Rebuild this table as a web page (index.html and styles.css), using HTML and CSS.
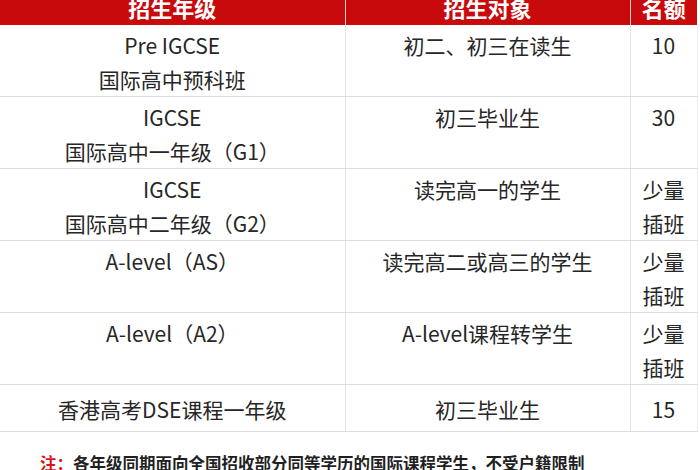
FILE: index.html
```html
<!DOCTYPE html>
<html lang="zh-CN">
<head>
<meta charset="utf-8">
<link rel="stylesheet" href="styles.css">
</head>
<body>
<table class="grid">
  <colgroup>
    <col class="c1"><col class="c2"><col class="c3">
  </colgroup>
  <thead>
    <tr><th>招生年级</th><th>招生对象</th><th>名额</th></tr>
  </thead>
  <tbody>
    <tr><td>Pre IGCSE<br>国际高中预科班</td><td>初二、初三在读生</td><td>10</td></tr>
    <tr><td>IGCSE<br>国际高中一年级（G1）</td><td>初三毕业生</td><td>30</td></tr>
    <tr><td>IGCSE<br>国际高中二年级（G2）</td><td>读完高一的学生</td><td>少量<br>插班</td></tr>
    <tr><td>A-level（AS）</td><td>读完高二或高三的学生</td><td>少量<br>插班</td></tr>
    <tr><td>A-level（A2）</td><td>A-level课程转学生</td><td>少量<br>插班</td></tr>
    <tr class="single"><td>香港高考DSE课程一年级</td><td>初三毕业生</td><td>15</td></tr>
  </tbody>
</table>
<p class="note"><span class="mark">注：</span>各年级同期面向全国招收部分同等学历的国际课程学生，不受户籍限制</p>
</body>
</html>
```

FILE: styles.css
```css
html, body {
  margin: 0;
  padding: 0;
  background: #fff;
  overflow: hidden;
}
body {
  width: 700px;
  height: 470px;
  font-family: "Open Sans", "Noto Sans CJK SC", sans-serif;
  color: #262626;
}
.grid {
  border-collapse: collapse;
  table-layout: fixed;
  width: 697px;
  margin-top: -10px;
}
.c1 { width: 345px; }
.c2 { width: 285px; }
.c3 { width: 67px; }
.grid th {
  height: 35px;
  padding: 0;
  background: #c90a0d;
  color: #fff;
  font-family: "Noto Sans CJK SC", sans-serif;
  font-weight: 700;
  font-size: 22px;
  line-height: 35px;
  text-align: center;
  border-left: 1px solid #f3d6d6;
}
.grid th:first-child { border-left: none; }
.grid td {
  padding: 3px 0 0;
  font-size: 21px;
  line-height: 34px;
  text-align: center;
  vertical-align: top;
  border-bottom: 1px solid #dcdcdc;
  border-left: 1px solid #e6e6e6;
  font-family: "Noto Sans CJK SC", sans-serif;
}
.grid td:first-child { border-left: none; }
.grid td:last-child { border-right: 1px solid #eeeeee; }
.grid .single td {
  padding: 7px 0 5px;
}
.note {
  margin: 19px 0 0;
  padding-left: 40px;
  font-family: "Noto Sans CJK SC", sans-serif;
  font-weight: 700;
  font-size: 16.5px;
  line-height: 24px;
  color: #1f1f1f;
  white-space: nowrap;
}
.mark { color: #d8141b; }
```
